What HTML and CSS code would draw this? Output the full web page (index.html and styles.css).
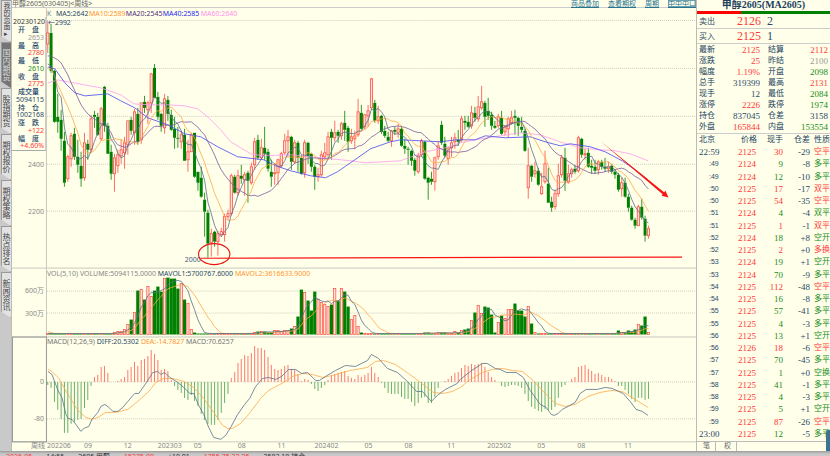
FILE: index.html
```
<!DOCTYPE html>
<html lang="zh-CN">
<head>
<meta charset="utf-8">
<title>甲醇2605 周线</title>
<link rel="stylesheet" href="styles.css">
</head>
<body>
<div class="app">
  <nav class="tabs">
    <a href="#" class="tab first">我的页面▸</a>
    <a href="#" class="tab active">国内期货</a>
    <a href="#" class="tab">股指期货</a>
    <a href="#" class="tab">期权报价</a>
    <a href="#" class="tab">期权策略</a>
    <a href="#" class="tab">热点排名</a>
    <a href="#" class="tab">新闻资讯</a>
  </nav>
  <main class="main">
    <header class="bar">
      <span class="name">甲醇2605(030405)&lt;周线&gt;</span>
      <span class="links"><a href="#">商品叠加</a><a href="#">查看期权</a><a href="#">周期</a><a href="#" class="box">中中中口</a></span>
    </header>
    <div class="stage">
      <svg class="chart" id="chart" viewBox="11 8 685 444" role="img" aria-label="周K线"></svg>
      <div class="info">
        <p>20230120</p>
        <dl>
          <dt>开　盘</dt><dd class="mute">2653</dd>
          <dt>最　高</dt><dd class="up">2780</dd>
          <dt>最　低</dt><dd class="down">2610</dd>
          <dt>收　盘</dt><dd class="up">2775</dd>
          <dt>成交量</dt><dd>5094115</dd>
          <dt>持　仓</dt><dd>1002168</dd>
          <dt>涨　跌</dt><dd class="up">+122</dd>
          <dt>幅　度</dt><dd class="up">+4.60%</dd>
        </dl>
      </div>
    </div>
  </main>
  <aside class="quote">
    <h1>甲醇2605(MA2605)</h1>
    <div class="ratio"><i></i></div>
    <div class="deal"><span>卖出</span><b>2126</b><em>2</em></div>
    <div class="deal"><span>买入</span><b>2125</b><em>1</em></div>
    <table class="stats">
      <tr><th>最新</th><td class="up">2125</td><th>结算</th><td class="up">2112</td></tr>
      <tr><th>涨跌</th><td class="up">25</td><th>昨结</th><td class="mute">2100</td></tr>
      <tr><th>幅度</th><td class="up">1.19%</td><th>开盘</th><td class="down">2098</td></tr>
      <tr><th>总手</th><td>319399</td><th>最高</th><td class="up">2131</td></tr>
      <tr><th>现手</th><td>12</td><th>最低</th><td class="down">2084</td></tr>
      <tr><th>涨停</th><td class="up">2226</td><th>跌停</th><td class="down">1974</td></tr>
      <tr><th>持仓</th><td>837045</td><th>仓差</th><td>3158</td></tr>
      <tr><th>外盘</th><td class="up">165844</td><th>内盘</th><td class="down">153554</td></tr>
    </table>
    <table class="ticks">
      <thead><tr><th>北京</th><th>价格</th><th>现手</th><th>仓差</th><th>性质</th></tr></thead>
      <tbody id="ticks"></tbody>
    </table>
    <div class="views"><a href="#">笔</a><a href="#">权</a></div>
    <i class="handle"></i>
  </aside>
  <footer class="status"><span class="up">2026-05</span><span>14:55</span><span>2605 甲醇</span><span class="up">15275.00</span><span>+10.01</span><span class="up">1755.75 22.25</span><span>2583.18 持仓</span></footer>
</div>
<script src="chart.js"></script>
</body>
</html>
```
FILE: styles.css
```
* { box-sizing: border-box; }
body {
  margin: 0;
  background: #c6c6c6;
  color: #2c4a68;
  font-family: "Noto Sans", "Noto Sans CJK SC", sans-serif;
  font-size: 7px;
  line-height: 8px;
}
a { color: inherit; text-decoration: none; }
.app {
  display: grid;
  grid-template-columns: 11px 1fr 134px;
  height: 100vh;
  overflow: hidden;
  grid-template-rows: auto 1fr;
}
.up { color: #ff3838; }
.down { color: #218c21; }
.mute { color: #999; }

.tabs { display: flex; flex-direction: column; background: #c9c9c9; }
.tab {
  height: 46px;
  margin-left: 1px;
  padding: 2px 1px;
  background: #e2e2e2;
  border: 1px solid #999;
  border-right: 0;
  color: #444;
  writing-mode: vertical-rl;
  text-orientation: upright;
  text-align: center;
  font-size: 8px;
  line-height: 8px;
  white-space: nowrap;
  clip-path: polygon(0 0, 100% 0, 100% 100%, 0 86%);
}
.tab.first { height: 42px; padding-top: 0; font-size: 7px; }
.tab.active { background: #757575; color: #ddd; }

.main { background: #ffffea; min-width: 0; border-left: 1px solid #bbb; }
.bar {
  display: flex;
  justify-content: space-between;
  height: 8px;
  border-bottom: 1px solid #ccc;
  color: #666;
  line-height: 7px;
}
.links { display: flex; gap: 9px; color: #28738f; }
.links a { text-decoration: underline; }
.links .box { outline: 1px solid #68a0b0; outline-offset: -1px; }
.stage { position: relative; }
.chart { display: block; width: 100%; height: auto; }
.chart text { font-size: 7px; fill: #888; white-space: pre; }
.info {
  position: absolute;
  top: 9px;
  left: 0;
  width: 34px;
  border-bottom: 1px solid #aaa;
  border-right: 1px solid #ccc;
  background: #ffffea;
  text-align: right;
}
.info p { margin: 0; line-height: 9px; color: #333; }
.info dl { display: grid; grid-auto-rows: 1fr; height: 124px; margin: 0 1px 0 0; line-height: 7px; }
.info dt { padding-right: 5px; color: #20456a; font-weight: 500; }
.info dd { margin: 0; }

.quote {
  position: relative;
  display: flex;
  flex-direction: column;
  background: #ffffea;
  border-left: 1px solid #bbb;
  font-family: "Liberation Serif", "Noto Sans CJK SC", serif;
  font-size: 9px;
}
.quote h1 {
  height: 11px;
  margin: 0;
  overflow: hidden;
  text-align: center;
  font-size: 10px;
  line-height: 10px;
  color: #203f60;
}
.ratio { height: 3px; background: #008000; }
.ratio i { display: block; width: 33%; height: 3px; background: #f00; }
.deal {
  display: grid;
  grid-template-columns: 22px 40px 1fr;
  height: 15px;
  padding-left: 2px;
  border-bottom: 1px solid #ccc;
  line-height: 15px;
  font-size: 12px;
}
.deal span { font-size: 8px; }
.deal b { font-weight: 400; color: #ff3838; text-align: right; }
.deal em { padding-left: 6px; font-style: normal; }
table { border-collapse: collapse; width: 100%; table-layout: fixed; }
th, td { padding: 0; font-weight: 400; text-align: right; white-space: nowrap; }
th { font-size: 8px; color: #203f60; }
.stats { height: 90px; line-height: 10px; border-bottom: 1px solid #ccc; }
.stats th { width: 20px; padding-left: 2px; text-align: left; }
.stats th:nth-child(3) { width: 27px; padding-left: 8px; }
.stats td:nth-child(4) { padding-right: 2px; }
.ticks { height: 306px; line-height: 12px; }
.ticks th:nth-child(1) { width: 26px; padding-left: 2px; text-align: left; }
.ticks th:nth-child(2) { width: 34px; }
.ticks th:nth-child(3) { width: 26px; }
.ticks th:nth-child(4) { width: 27px; }
.ticks td:nth-child(1) { text-align: left; padding-left: 2px; }
.ticks td.sec { padding-left: 12px; font-size: 7px; font-family: "Liberation Sans", sans-serif; }
.ticks td:last-child { text-align: right; font-size: 8px; }
.ticks td.price { padding-right: 1px; color: #ff3838; }
.views {
  display: flex;
  gap: 8px;
  height: 10px;
  margin-top: auto;
  padding-left: 6px;
  border-top: 1px solid #bbb;
  font-size: 7px;
  line-height: 8px;
  color: #666;
}
.views a { padding-right: 5px; border-right: 1px solid #bbb; }
.handle { position: absolute; right: 0; bottom: 0; width: 4px; height: 21px; background: #3b7390; border-radius: 2px 0 0 0; }
.status {
  grid-column: 1 / -1;
  display: flex;
  gap: 14px;
  overflow: hidden;
  min-height: 0;
  padding: 2px 6px 0;
  background: linear-gradient(#9c9c9c, #c8c8c8 3px);
  color: #333;
}
```
FILE: chart.js
```
const STEP = 3.342, X0 = 46.8;
const xAt = i => X0 + STEP * i;

// Each candle: direction, body top, body bottom, wick top, wick bottom.
const candles = `r33,44,21,53 g33,71,24,73 g71,122,70,123 g117,122,94,133 g120,139,110,151 g141,183,132,187 r157,179,155,182 r136,159,133,167 g134,157,128,160 g157,165,140,173
g166,179,152,187 r143,178,133,181 g144,150,140,160 r119,150,115,153 g115,117,111,128 g117,135,113,136 r109,139,107,141 g87,126,86,132 g126,154,123,154 g152,174,145,180
r158,174,154,192 r155,166,150,173 r150,156,140,164 r143,153,137,169 r121,145,121,155 g120,131,117,135 r112,133,109,145 g114,142,108,145 r103,140,103,144 g102,108,96,113
r103,110,101,124 r74,103,73,113 g68,98,64,98 g97,117,92,120 g114,126,113,132 r99,128,94,134 g100,114,96,121 g115,130,110,131 g129,138,117,149 g138,139,127,148
r135,142,131,149 g135,161,129,161 r152,160,140,172 r135,152,133,152 g133,177,133,178 g172,183,172,191 g178,197,167,198 g200,212,193,237 g213,244,210,258 r234,243,229,257
g232,242,231,247 r234,242,231,256 r232,235,228,236 r217,235,214,242 r214,217,210,220 r176,214,174,216 g177,193,175,194 r176,193,170,196 g176,179,165,184 r175,180,172,196
g173,181,171,203 r167,183,163,185 r142,165,138,170 g140,158,135,160 r148,158,139,160 g148,154,127,160 g152,169,149,172 g172,177,160,187 r173,174,164,185 r160,173,159,185
r154,166,152,168 r141,153,134,155 r137,141,130,157 g137,162,136,170 r143,162,140,164 g143,158,141,172 g158,174,155,175 r143,173,140,178 g143,157,142,164 g154,167,153,172
g167,177,165,190 r175,177,168,182 r155,175,151,177 r153,157,143,160 r137,155,132,157 g132,138,129,160 r133,138,121,142 g132,136,130,143 r124,136,122,140 g123,130,111,141
g128,142,126,152 r137,141,129,144 r136,139,131,149 r112,135,99,137 g113,129,105,130 r115,127,114,130 r111,116,105,127 r79,108,78,110 g103,121,100,123 r117,121,106,124
g116,132,115,134 g131,136,126,138 g137,141,132,142 r131,141,130,147 g130,132,127,135 r129,133,124,138 g129,146,126,147 g146,149,139,154 g149,150,147,165 g151,161,150,166
g160,171,158,176 r156,172,153,174 r141,155,139,157 g142,179,141,180 g178,183,177,200 g179,182,172,185 r158,182,157,191 r146,157,141,160 g125,143,121,145 g144,156,137,158
r148,159,147,165 r143,148,137,157 r138,142,133,149 g140,142,130,146 r119,140,116,142 g121,123,116,130 g122,127,116,128 r113,126,106,129 g113,118,107,122 r107,119,96,122
r102,108,86,110 g103,117,101,127 g111,116,98,120 g115,126,112,130 g126,128,121,129 r117,126,114,128 g118,134,111,135 r127,132,125,136 r119,129,117,138 r118,123,111,125
g116,118,110,135 g118,126,117,136 g127,130,117,133 g131,151,129,152 r166,188,148,199 g166,177,165,182 r171,174,162,178 g171,185,168,186 r187,194,173,195 r164,182,151,184
g184,203,168,203 g202,208,197,212 r194,207,190,210 r176,194,164,197 r158,175,155,178 g158,181,148,191 r174,182,165,184 r170,174,168,178 g169,172,165,174 r138,171,136,173
g139,155,138,158 r154,155,149,160 g153,167,148,168 g166,168,160,174 g167,171,160,174 r162,170,160,175 g162,167,160,170 g167,169,158,172 r167,169,162,173 g166,172,164,174
g172,175,170,179 g175,190,173,192 r183,189,178,197 g183,197,178,198 g197,208,194,212 g208,220,206,221 g220,226,218,229 r207,226,205,226 g207,218,199,220 g219,236,216,242 r229,236,226,239`
  .split(/\s+/).map(s => [s[0], ...s.slice(1).split(',').map(Number)]);

// Volume bar heights, keyed by the first index of each run.
const volume = new Array(181).fill(1);
const fill = (start, list) => list.forEach((v, k) => { volume[start + k] = v; });
fill(20, [2, 3, 3, 5, 10, 15, 22, 44, 45, 35, 48, 38, 44, 48, 43, 56, 57, 56, 56, 46, 51, 35, 31, 5, 2]);
fill(62, [2, 3, 3, 3, 2, 2, 4, 4, 3, 4, 4, 6, 8, 18, 45, 42, 34, 24, 43, 35, 32, 30, 28, 30, 46, 34, 46, 43, 28, 15, 19, 8, 2]);
fill(113, [2, 2, 1, 1, 2, 2, 2, 1, 1, 3, 2, 4, 5, 6, 14, 22, 29, 21, 28, 27, 20, 2, 12, 19, 16, 25, 25, 31, 24, 24, 18, 28, 11, 2]);
fill(171, [4, 2, 2, 4, 3, 5, 10, 9, 18, 2]);

const macd = [-3,-6,-20,-28,-37,-51,-51,-42,-40,-38,-37,-26,-18,-4,5,7,15,16,9,0,0,1,3,5,12,15,20,16,22,23,26,32,28,22,12,13,11,2,-4,-8,-11,-16,-18,-13,-19,-24,-32,-38,-42,-43,-43,-38,-31,-21,-12,
  4,10,19,23,27,26,29,36,34,34,32,25,17,13,12,13,16,17,13,12,8,1,3,2,-2,-7,-9,-6,-3,2,7,8,9,10,11,6,4,3,7,5,7,9,15,9,5,-1,-6,-11,-12,-12,-12,-15,-17,-17,-20,-24,-21,-16,-15,-21,-21,-15,-6,0,1,3,6,9,10,14,17,16,
  18,17,18,19,15,10,5,2,0,-4,-5,-4,-3,-3,-4,-6,-12,-19,-25,-27,-29,-30,-27,-28,-28,-25,-16,-5,-3,0,3,5,15,16,17,13,11,8,9,7,5,5,3,1,-4,-4,-8,-12,-17,-20,-16,-16,-18,-17];

const average = (list, n, lead) => list.map((_, i) => {
  if (i < lead.length) return lead[i];
  const part = list.slice(Math.max(0, i - n + 1), i + 1);
  return part.reduce((a, b) => a + b, 0) / part.length;
});
const series = list => list.map((y, i) => `${xAt(i).toFixed(1)},${y.toFixed(1)}`).join(' ');
const line = (points, color) => `<polyline points="${points}" fill="none" stroke="${color}" stroke-width=".8" stroke-linejoin="round"/>`;
const rule = (y, color = '#d6d6c6', x = 45) => `<path d="M${x} ${y}H696" stroke="${color}"/>`;
const dotted = y => `<path d="M46 ${y}H696" stroke="#cfcfc4" stroke-dasharray="1 1"/>`;
const label = (x, y, text, color = '#888', anchor = 'start') => `<text x="${x}" y="${y}" text-anchor="${anchor}" style="fill:${color}">${text}</text>`;
const legend = (y, parts) => `<text x="46" y="${y}">${parts.map(([text, color]) => `<tspan style="fill:${color}">${text} </tspan>`).join('')}</text>`;

const NAVY = '#58708c', ORANGE = '#ffa848', PURPLE = '#7a58a0', BLUE = '#4848f4', PINK = '#ff9cf0';
const closes = candles.map(c => c[0] === 'r' ? c[1] : c[2]);
let out = '';
[20.5, 68.5, 116.5, 164.5, 211.5, 291.5, 313.5, 382.5, 419.5].forEach(y => { out += dotted(y); });
out += rule(268.5, '#c8c8c0', 11) + rule(337.5, '#c8c8c0', 11) + rule(442.5, '#c8c8c0', 11);
out += '<path d="M45.5 8V442" stroke="#c8c8c0"/><rect x="11.5" y="337.5" width="34" height="105" fill="none" stroke="#999"/>';

candles.forEach(([dir, top, bottom, high, low], i) => {
  const x = xAt(i), up = dir === 'r', color = up ? '#ff4a42' : '#008000';
  out += `<path d="M${x.toFixed(1)} ${high}V${top}M${x.toFixed(1)} ${bottom}V${low}" stroke="${color}" stroke-width=".8"/>`;
  out += up
    ? `<rect x="${(x - 1.1).toFixed(1)}" y="${top}" width="2.2" height="${bottom - top}" fill="#ffe6d6" stroke="${color}" stroke-width=".8"/>`
    : `<rect x="${(x - 1.5).toFixed(1)}" y="${top}" width="3" height="${bottom - top}" fill="${color}"/>`;
  const v = volume[i];
  out += up
    ? `<rect x="${(x - 1.1).toFixed(1)}" y="${335 - v}" width="2.2" height="${v}" fill="#ffe6d6" stroke="${color}" stroke-width=".7"/>`
    : `<rect x="${(x - 1.6).toFixed(1)}" y="${335 - v}" width="3.2" height="${v}" fill="${color}"/>`;
  const m = macd[i] || 0;
  out += `<path d="M${x.toFixed(1)} 382.5v${-m}" stroke="${m > 0 ? '#ff6a62' : '#58a858'}" stroke-width=".9"/>`;
});

out += line('47,83 57,80 73,83 100,88 120,95 133,104 150,105 167,105 184,106 197,109 207,117 220,130 230,142 240,148 250,154 262,156 290,155 310,157 330,159 350,161 365,163 400,161 425,152 445,148 460,143 475,140 500,136 520,133 540,135 560,142 580,148 600,150 615,151 630,154 648,161', PINK);
out += line('47,67 54,69 64,83 74,93 84,96 107,94 120,101 134,108 147,118 167,125 184,134 200,137 217,147 237,157 263,160 275,166 290,171 310,176 325,178 337,172 350,163 370,149 390,142 400,140 420,141 440,142 456,140 475,140 485,136 505,138 530,137 545,142 560,146 570,144 590,147 605,152 622,161 635,170 648,180', BLUE);
out += line(series(average(closes, 20, [56, 56, 58, 60, 63, 69, 75, 83, 90, 98, 105, 110, 114, 117, 119, 122, 124, 126, 128, 133])), PURPLE);
out += line(series(average(closes, 10, [68, 69, 76, 85, 92, 100, 107, 115, 124, 133, 145])), ORANGE);
out += line(series(average(closes, 5, [64, 66, 75, 92])), NAVY);
out += line(series(average(volume, 10, [3, 2]).map(v => 335 - v)), ORANGE);
out += line(series(average(volume, 5, []).map(v => 335 - v)), NAVY);
out += line('47,370 51,372 58,379 67,395 77,411 85,418 91,420 97,418 105,413 115,413 127,410 137,402 148,392 155,383 163,379 172,379 183,382 193,388 203,399 213,413 222,426 227,429 232,429 240,424 248,415 260,399 268,391 285,382 292,377 302,374 312,375 322,378 332,376 350,371 367,368 375,362 383,361 395,365 408,374 420,383 433,393 443,394 452,392 460,388 470,380 482,373 492,370 502,369 512,371 522,372 533,381 545,394 555,404 565,407 575,405 588,397 600,393 612,391 622,392 635,400 648,408', ORANGE);
out += line('47,372 51,375 57,391 61,398 65,415 67,419 71,420 75,425 80,432 83,429 88,427 91,420 97,413 100,407 104,405 108,408 112,412 117,412 122,408 127,402 134,394 138,394 145,384 152,373 157,372 160,375 164,373 169,378 177,383 183,388 189,394 193,394 198,406 203,415 208,428 213,438 220,440 225,436 230,428 237,415 244,405 249,399 255,387 262,379 268,378 275,380 281,377 288,370 295,370 301,374 307,373 315,381 319,381 325,377 335,371 345,366 355,367 367,361 371,355 378,359 387,369 397,373 407,382 416,392 422,392 431,402 437,396 445,390 457,384 460,380 470,372 482,364 487,364 495,369 500,370 506,373 516,373 523,378 530,391 540,405 546,408 551,415 554,416 558,414 562,410 568,407 575,403 580,394 586,390 597,390 605,388 612,389 623,394 630,402 636,410 642,412 648,416', NAVY);

out += label(43, 167, '2400', '#888', 'end') + label(43, 214, '2200', '#888', 'end');
out += label(43, 293, '600万', '#888', 'end') + label(43, 316, '300万', '#888', 'end');
out += label(43, 385, '0', '#888', 'end') + label(43, 422, '-80', '#888', 'end');
out += label(184, 262, '2000', '#406080') + label(47, 25, '←2992', '#2c4a68');
[[46, 'K', '#777'], [55, 'MA5:2642', '#2c4a68'], [88, 'MA10:2589', '#ff9430'], [125, 'MA20:2545', '#50307c'], [162, 'MA40:2585', '#2828f0'], [200, 'MA60:2640', '#ff90ee']].forEach(t => { out += label(t[0], 16, t[1], t[2]); });
out += legend(276, [['VOL(5,10)', '#888'], ['VOLUME:5094115.0000', '#888'], ['MAVOL1:5700767.6000', '#2c4a68'], ['MAVOL2:3616633.9000', '#ff9430']]);
out += legend(345, [['MACD(12,26,9)', '#777'], ['DIFF:20.5302', '#2c4a68'], ['DEA:-14.7827', '#ff9430'], ['MACD:70.6257', '#777']]);
[[30, '周线'], [46, '202206'], [83, '09'], [123, '12'], [157, '202303'], [193, '05'], [237, '08'], [277, '11'], [314, '202402'], [364, '05'], [404, '08'], [447, '11'], [487, '202502'], [537, '05'], [577, '08'], [624, '11']].forEach(t => { out += label(t[0], 449, t[1]); });

out += '<ellipse cx="213.5" cy="254.5" rx="15.7" ry="10.5" fill="none" stroke="#e81414" stroke-width="1.1"/>';
out += '<path d="M200 258.6L682 257.4" stroke="#fa1414" stroke-width="1.2"/>';
out += '<path d="M601 142L664 192.600 665.400 191 668.500 197.700 661.500 196 662.600 194.500Z" fill="#fa1414"/>';
document.getElementById('chart').innerHTML = out;

// Tick rows: time, price, lots, open-interest change, nature, direction.
const ticks = `22:59 2125 30 -29 空平 u|:49 2124 9 -8 多平 d|:49 2124 12 -10 多平 d|:50 2125 17 -17 双平 u|:50 2125 54 -35 空平 u|:51 2124 4 -4 双平 d|:51 2125 1 -1 双平 u|:52 2124 18 +8 空开 d|:52 2125 2 +0 多换 u|:53 2124 19 +1 空开 d|:53 2124 70 -9 多平 d|:54 2125 112 -48 空平 u|:54 2125 16 -8 多平 d|:55 2125 57 -41 多平 d|:55 2125 4 -3 多平 d|:56 2125 13 +1 空开 d|:56 2126 18 -6 空平 u|:57 2125 70 -45 多平 d|:57 2125 1 +0 空换 d|:58 2125 41 -1 多平 d|:58 2125 4 -3 多平 d|:59 2125 5 +1 空开 d|:59 2125 87 -26 空平 u|23:00 2125 12 -5 多平 d`;
document.getElementById('ticks').innerHTML = ticks.split('|').map(row => {
  const [time, price, lots, change, nature, way] = row.split(' ');
  const tone = way === 'u' ? 'up' : 'down';
  return `<tr><td class="${time[0] === ':' ? 'sec' : ''}">${time}</td><td class="price">${price}</td><td class="${tone}">${lots}</td><td>${change}</td><td class="${tone}">${nature}</td></tr>`;
}).join('');
```
